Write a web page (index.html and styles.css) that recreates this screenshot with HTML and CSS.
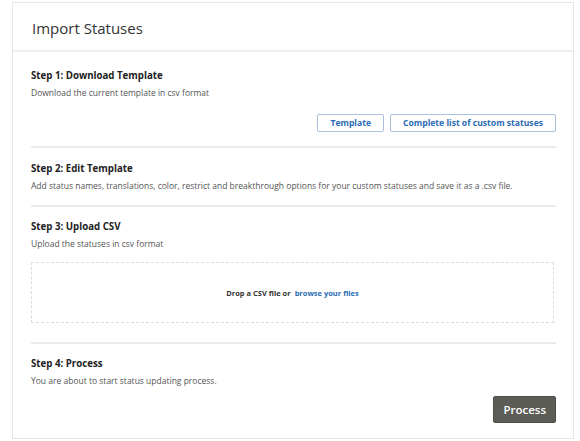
FILE: index.html
```html
<!DOCTYPE html>
<html lang="en">
<head>
    <meta charset="UTF-8">
    <meta name="viewport" content="width=device-width, initial-scale=1.0">
    <title>Import Statuses</title>
    <link rel="stylesheet" href="styles.css">
</head>
<body>
    <div class="panel">
        <div class="panel-header">
            <h1>Import Statuses</h1>
        </div>

        <div class="panel-body">
            <div class="step">
                <h2>Step 1: Download Template</h2>
                <p>Download the current template in csv format</p>
                <div class="actions">
                    <button class="button-outline">Template</button>
                    <button class="button-outline">Complete list of custom statuses</button>
                </div>
            </div>

            <div class="step">
                <h2>Step 2: Edit Template</h2>
                <p>Add status names, translations, color, restrict and breakthrough options for your custom statuses and save it as a .csv file.</p>
            </div>

            <div class="step">
                <h2>Step 3: Upload CSV</h2>
                <p>Upload the statuses in csv format</p>
                <div class="dropzone">
                    <span>Drop a CSV file or</span>
                    <a href="#" class="browse">browse your files</a>
                </div>
            </div>

            <div class="step last">
                <h2>Step 4: Process</h2>
                <p>You are about to start status updating process.</p>
                <div class="actions process-row">
                    <button class="button-dark">Process</button>
                </div>
            </div>
        </div>
    </div>
</body>
</html>
```

FILE: styles.css
```css
body {
    font-family: "Open Sans", "Noto Sans", sans-serif;
    margin: 0;
    padding: 2px 6px 0 12px;
    background-color: #fff;
    color: #222;
}
.panel {
    border: 1px solid #e6e6e6;
    background-color: #fff;
}
.panel-header {
    height: 49px;
    display: flex;
    align-items: center;
    padding: 0 19px;
    border-bottom: 2px solid #efefef;
    box-sizing: border-box;
}
.panel-header h1 {
    margin: 0;
    font-size: 15px;
    font-weight: 400;
    color: #333;
    position: relative;
    top: 1px;
}
.panel-body {
    padding: 3.5px 17px 0 18px;
}
.step {
    padding: 14.5px 0 14px;
    border-bottom: 2px solid #ebebeb;
}
.step.last {
    border-bottom: none;
    padding-bottom: 15px;
}
.step h2 {
    margin: 0;
    font-size: 9.7px;
    line-height: 12px;
    font-weight: 700;
    color: #222;
}
.step p {
    margin: 6px 0 0;
    font-size: 8.5px;
    line-height: 10px;
    color: #555;
}
.actions {
    display: flex;
    justify-content: flex-end;
    gap: 6px;
    margin-top: 16px;
}
.button-outline {
    font-family: inherit;
    height: 18px;
    padding: 0 12px;
    font-size: 8.6px;
    font-weight: 700;
    color: #2a6cb5;
    background-color: #fff;
    border: 1px solid #a9c1dc;
    border-radius: 2px;
    cursor: pointer;
}
.dropzone {
    margin: 13px 2px 4.5px 0;
    height: 59px;
    border: 1px dashed #dedede;
    display: flex;
    align-items: center;
    justify-content: center;
    gap: 4px;
    font-size: 7.5px;
    font-weight: 700;
    color: #333;
}
.browse {
    color: #2a6cb5;
    text-decoration: none;
}
.process-row {
    margin-top: 9.5px;
}
.button-dark {
    font-family: inherit;
    height: 27px;
    padding: 0 9px;
    font-size: 11.5px;
    font-weight: 600;
    color: #fff;
    background-color: #5d5d58;
    border: 1px solid #4f4f4a;
    border-radius: 2px;
    cursor: pointer;
}
```
